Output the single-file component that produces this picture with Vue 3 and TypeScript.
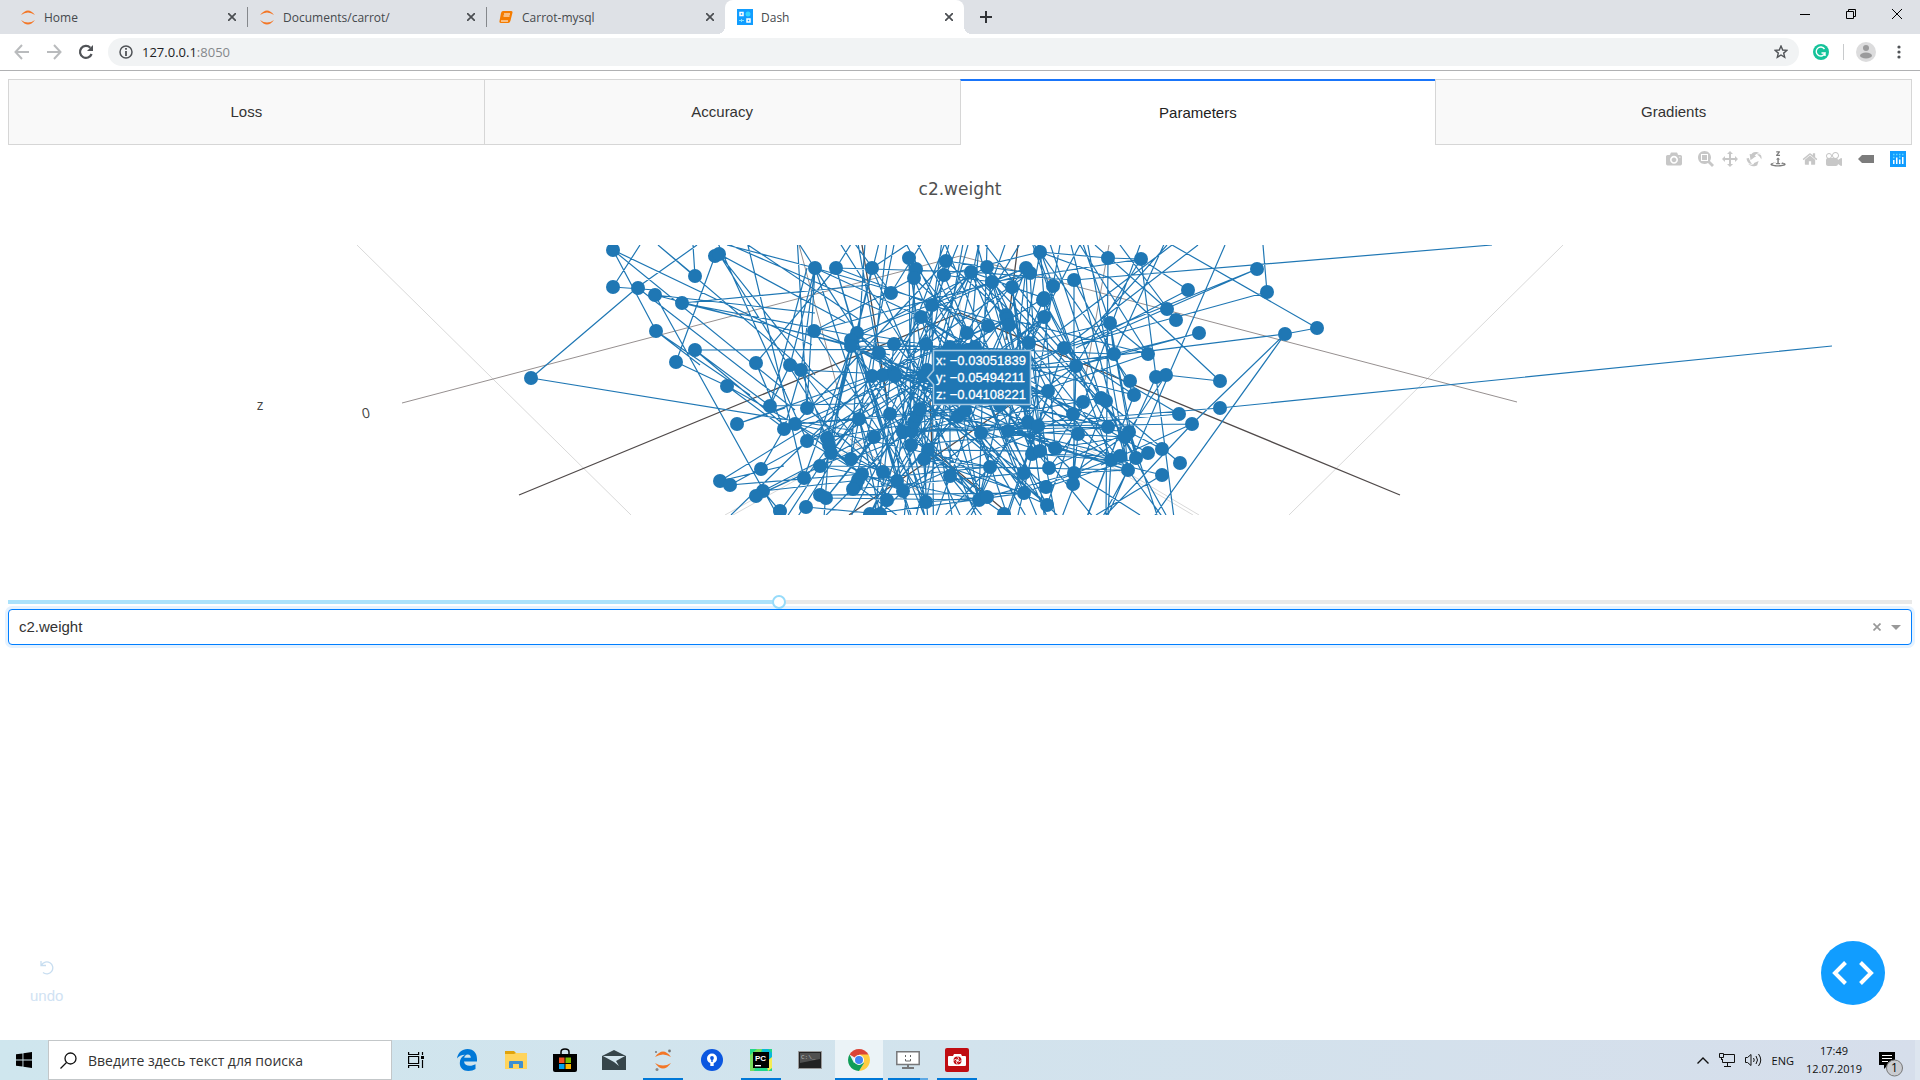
<script setup lang="ts">
import { ref } from 'vue'

interface ModeIcon { name: string; path: string; box: string; shift: number; active?: boolean }

const sliderValue = ref(404)
const layer = ref('c2.weight')
const query = ref('')
const address = '127.0.0.1'

const browserTabs = [
  { title: 'Home', icon: 'jupyter' },
  { title: 'Documents/carrot/', icon: 'jupyter' },
  { title: 'Carrot-mysql', icon: 'book' },
  { title: 'Dash', icon: 'dash' },
]
const views = ['Loss', 'Accuracy', 'Parameters', 'Gradients']
const current = ref('Parameters')

const modeGroups: ModeIcon[][] = [
  [{ name: 'Download plot as a png', box: '0 0 1000 1000', shift: 850, path: 'm500 450c-83 0-150-67-150-150 0-83 67-150 150-150 83 0 150 67 150 150 0 83-67 150-150 150z m400 150h-120c-16 0-34 13-39 29l-31 93c-6 15-23 28-40 28h-340c-16 0-34-13-39-28l-31-94c-6-15-23-28-40-28h-120c-55 0-100-45-100-100v-450c0-55 45-100 100-100h800c55 0 100 45 100 100v450c0 55-45 100-100 100z m-400-550c-138 0-250 112-250 250 0 138 112 250 250 250 138 0 250-112 250-250 0-138-112-250-250-250z m365 380c-19 0-35 16-35 35 0 19 16 35 35 35 19 0 35-16 35-35 0-19-16-35-35-35z' }],
  [
    { name: 'Zoom', box: '0 0 1000 1000', shift: 850, path: 'm1000-25l-250 251c40 63 63 138 63 218 0 224-182 406-407 406-224 0-406-182-406-406s183-406 407-406c80 0 155 22 218 62l250-250 125 125z m-812 250l0 438 437 0 0-438-437 0z m62 375l313 0 0-312-313 0 0 312z' },
    { name: 'Pan', box: '0 0 1000 1000', shift: 850, path: 'm1000 350l-187 188 0-125-250 0 0 250 125 0-188 187-187-187 125 0 0-250-250 0 0 125-188-188 186-187 0 125 252 0 0-250-125 0 187-188 188 188-125 0 0 250 250 0 0-126 187 188z' },
    { name: 'Orbital rotation', box: '0 0 1000 1000', shift: 850, path: 'm922 660c-5 4-9 7-14 11-359 263-580-31-580-31l-102 28 58-400c0 1 1 1 2 2 118 108 351 249 351 249s-62 27-100 42c88 83 222 183 347 122 16-8 30-17 44-27-2 1-4 2-6 4z m36-329c0 0 64 229-88 296-62 27-124 14-175-11 157-78 225-208 249-266 8-19 11-31 11-31 2 5 6 15 11 32-5-13-8-20-8-20z m-775-239c70-31 117-50 198-32-121 80-199 346-199 346l-96-15-58-12c0 0 55-226 155-287z m603 133l-317-139c0 0 4-4 19-14 7-5 24-15 24-15s-177-147-389 4c235-287 536-112 536-112l31-22 100 299-4-1z' },
    { name: 'Turntable rotation', box: '0 0 1000 1000', shift: 850, active: true, path: 'm833 5l-17 108v41l-130-65 130-66c0 0 0 38 0 39 0-1 36-14 39-25 4-15-6-22-16-30-15-12-39-16-56-20-90-22-187-23-279-23-261 0-341 34-353 59 3 60 228 110 228 110-140-8-351-35-351-116 0-120 293-142 474-142 155 0 477 22 477 142 0 50-74 79-163 96z m-374 94c-58-5-99-21-99-40 0-24 65-43 144-43 79 0 143 19 143 43 0 19-42 34-98 40v216h87l-132 135-133-135h88v-216z m167 515h-136v1c16 16 31 34 46 52l84 109v54h-230v-71h124v-1c-16-17-28-32-44-51l-89-114v-51h245v72z' },
  ],
  [
    { name: 'Reset camera to default', box: '0 0 929 1000', shift: 850, path: 'm786 296v-267q0-15-11-26t-25-10h-214v214h-143v-214h-214q-15 0-25 10t-11 26v267q0 1 0 2t0 2l321 264 321-264q1-1 1-4z m124 39l-34-41q-5-5-12-6h-2q-7 0-12 3l-386 322-386-322q-7-4-13-4-7 2-12 7l-35 41q-4 5-3 13t6 12l401 334q18 15 42 15t43-15l136-114v109q0 8 5 13t13 5h107q8 0 13-5t5-13v-227l122-102q5-5 6-12t-4-13z' },
    { name: 'Reset camera to last save', box: '0 0 1000 1000', shift: 850, path: 'm938 413l-188-125c0 37-17 71-44 94 64 38 107 107 107 187 0 121-98 219-219 219-121 0-219-98-219-219 0-61 25-117 66-156h-115c30 33 49 76 49 125 0 103-84 187-187 187s-188-84-188-187c0-57 26-107 65-141-38-22-65-62-65-109v-250c0-70 56-126 125-126h500c69 0 125 56 125 126l188-126c34 0 62 28 62 63v375c0 35-28 63-62 63z m-750 0c-69 0-125 56-125 125s56 125 125 125 125-56 125-125-56-125-125-125z m406-1c-87 0-157 70-157 157 0 86 70 156 157 156s156-70 156-156-70-157-156-157z' },
  ],
  [{ name: 'Toggle show closest data on hover', box: '0 0 1500 1000', shift: 850, active: true, path: 'm375 725l0 0-375-375 375-374 0-1 1125 0 0 750-1125 0z' }],
]

type Pair = [number, number]
type Segment = [number, number, number, number]

/* Projected positions of the weights. */
const points: Pair[] = [
  [613, 250], [715, 256], [719, 254], [613, 287], [638, 288], [655, 295], [682, 303], [695, 276], [656, 331], [695, 350],
  [676, 362], [531, 378], [756, 363], [790, 365], [801, 370], [727, 386], [737, 424], [770, 406], [807, 408], [784, 429],
  [795, 424], [807, 441], [761, 469], [720, 481], [730, 485], [763, 491], [756, 496], [804, 478], [780, 511], [806, 507],
  [815, 268], [836, 268], [872, 268], [909, 258], [916, 269], [914, 278], [946, 261], [944, 275], [971, 272], [987, 267],
  [992, 282], [1012, 287], [1026, 268], [1030, 273], [1040, 252], [1053, 286], [1043, 300], [1044, 298], [1044, 317],
  [1006, 315], [1007, 319], [1009, 325], [988, 326], [967, 333], [932, 305], [921, 317], [891, 293], [814, 331], [857, 333],
  [851, 340], [851, 346], [894, 344], [879, 353], [926, 344], [950, 347], [958, 350], [968, 350], [975, 347], [1029, 343],
  [872, 376], [883, 375], [894, 373], [895, 376], [927, 370], [924, 376], [890, 414], [859, 419], [827, 438], [829, 445],
  [831, 453], [874, 437], [903, 432], [912, 431], [914, 422], [917, 416], [920, 409], [911, 445], [928, 450], [924, 459],
  [958, 416], [965, 411], [981, 433], [1008, 431], [1028, 422], [1038, 426], [1048, 391], [1032, 454], [1040, 451],
  [1055, 448], [851, 459], [820, 466], [862, 474], [858, 480], [856, 485], [853, 489], [883, 472], [897, 481], [903, 491],
  [887, 500], [926, 502], [950, 476], [990, 467], [1024, 473], [1049, 468], [1046, 487], [1024, 493], [1047, 505],
  [820, 495], [826, 498], [979, 500], [987, 497], [870, 514], [880, 514], [1004, 514], [1000, 405], [1025, 402], [1074, 280],
  [1108, 258], [1141, 259], [1188, 290], [1167, 309], [1176, 320], [1199, 333], [1110, 323], [1064, 348], [1114, 354],
  [1148, 354], [1076, 366], [1156, 377], [1166, 375], [1220, 381], [1130, 381], [1134, 395], [1101, 398], [1106, 401],
  [1083, 402], [1073, 414], [1078, 434], [1108, 427], [1179, 414], [1192, 424], [1220, 408], [1129, 432], [1125, 437],
  [1111, 460], [1120, 456], [1136, 458], [1148, 453], [1162, 449], [1180, 463], [1162, 475], [1128, 470], [1074, 473],
  [1073, 484], [1257, 269], [1267, 292], [1317, 328], [1285, 334],
]

const outerSegments: Segment[] = [
  [531, 378, 638, 287], [531, 378, 850, 430], [613, 250, 656, 331], [613, 250, 812, 345], [613, 250, 785, 390],
  [613, 287, 640, 245], [613, 287, 655, 290], [638, 287, 697, 245], [655, 295, 775, 511], [655, 295, 815, 313],
  [655, 295, 850, 346], [682, 303, 870, 285], [682, 303, 851, 335], [682, 303, 890, 355], [656, 331, 750, 395],
  [676, 362, 715, 256], [676, 362, 727, 386], [695, 276, 693, 245], [695, 276, 658, 245], [658, 245, 880, 435],
  [695, 350, 1000, 349], [695, 350, 790, 430], [695, 350, 784, 425], [727, 386, 795, 424], [727, 386, 785, 429],
  [737, 424, 785, 408], [737, 424, 872, 376], [720, 481, 884, 380], [720, 481, 784, 466], [730, 485, 862, 474],
  [730, 485, 924, 380], [719, 254, 815, 375], [719, 254, 835, 440], [719, 254, 845, 322], [815, 268, 727, 245],
  [748, 245, 860, 320], [756, 363, 836, 268], [790, 365, 815, 268], [756, 363, 784, 429], [763, 491, 920, 409],
  [756, 496, 900, 430], [731, 515, 880, 370], [730, 245, 880, 310], [770, 406, 807, 268], [770, 406, 872, 403],
  [770, 406, 790, 365], [801, 370, 784, 429], [801, 370, 880, 470], [761, 469, 784, 429], [763, 491, 861, 480],
  [780, 511, 763, 491], [780, 511, 830, 445], [638, 288, 795, 410], [656, 331, 700, 365], [770, 406, 695, 350],
  [1074, 280, 1492, 245], [1257, 269, 1083, 345], [1257, 269, 1020, 365], [1267, 292, 1263, 245], [1267, 292, 1064, 348],
  [1317, 328, 1172, 245], [1317, 328, 1285, 334], [1285, 334, 1000, 370], [1285, 334, 1155, 515], [1285, 334, 1192, 424],
  [1192, 424, 1106, 515], [1199, 333, 1114, 354], [1199, 333, 1076, 366], [1188, 290, 1141, 259], [1188, 290, 1076, 348],
  [1220, 381, 1110, 278], [1110, 278, 1040, 252], [1220, 381, 1166, 375], [1220, 408, 1832, 346], [1220, 408, 1030, 423],
  [1192, 424, 1038, 426], [1192, 424, 1101, 465], [1179, 414, 1101, 368], [1179, 414, 1000, 430], [1180, 463, 1106, 401],
  [1162, 475, 1055, 448], [1162, 475, 1096, 515], [1225, 245, 1108, 515], [1198, 245, 1064, 348], [1172, 245, 1060, 330],
  [1162, 449, 1129, 432], [1130, 432, 1157, 515], [1074, 473, 1140, 515], [1101, 398, 1166, 515], [1166, 375, 1125, 437],
  [1134, 395, 1088, 515], [1156, 377, 1120, 456], [1108, 258, 1106, 515], [1108, 258, 1141, 259], [1108, 258, 1040, 252],
  [1167, 309, 1095, 245], [1176, 320, 1120, 245], [1148, 354, 1110, 323], [1148, 354, 1080, 245], [1167, 245, 1100, 320],
]

/* Joins pairs of weights with a fixed pseudo-random sequence so every render agrees. */
function innerSegments(): Segment[] {
  let state = 7919
  const next = (): number => {
    state = (state * 16807) % 2147483647
    return state / 2147483647
  }
  const core = points.filter(([x]) => x > 790 && x < 1150)
  const found: Segment[] = []
  while (found.length < 235) {
    const [ax, ay] = core[Math.floor(next() * core.length)]
    const [bx, by] = core[Math.floor(next() * core.length)]
    const reach = Math.hypot(ax - bx, ay - by)
    if (reach > 25 && reach < 230) found.push([ax, ay, bx, by])
  }
  for (let i = 0; i < 84; i++) {
    const [ax, ay] = core[Math.floor(next() * core.length)]
    const away = i % 2 ? 150 : 620
    const lean = (960 - ax) / 4 + (next() - 0.5) * 340
    found.push([ax, ay, ax + Math.round(lean), away])
  }
  return found
}

const traces = [...outerSegments, ...innerSegments()]
  .map(([a, b, c, d]) => `M${a} ${b}L${c} ${d}`)
  .join('')
</script>

<template>
  <div class="screen">
    <header class="tab-strip">
      <div v-for="(tab, i) in browserTabs" :key="tab.title" class="browser-tab" :class="{ active: i === 3, ruled: i < 2 }">
        <svg v-if="tab.icon === 'jupyter'" class="favicon" viewBox="0 0 16 16"><path d="M1 6Q8-3 15 6 8 1 1 6ZM1 11Q8 20 15 11 8 16 1 11Z" fill="#f37626" /></svg>
        <svg v-else-if="tab.icon === 'book'" class="favicon" viewBox="0 0 16 16"><path d="M5 2h8q2 0 1.400 2l-2 8q-.4 2-2.400 2H3q-2 0-1.500-2L3 4q.5-2 2-2Z" fill="#f57c00" /><path d="M6 5h6M5.500 7h6M3 12h7" stroke="#fff" /></svg>
        <svg v-else class="favicon" viewBox="0 0 16 16"><path fill="#119dff" d="M0 0h16v16H0z" /><path d="M3 3.500h3v3H3zM10 10h3v3h-3z" fill="none" stroke="#fff" stroke-width="1.500" /><path d="M2 11.500h5M4.500 10v3" stroke="#7fe0ff" /><circle cx="11" cy="5" r="2.500" fill="#36d6ff" /></svg>
        <span class="tab-title">{{ tab.title }}</span>
        <button class="bare" aria-label="Close tab"><svg width="8" height="8" viewBox="0 0 8 8"><path d="M0 0 8 8M8 0 0 8" stroke="#4a4d51" stroke-width="1.700" /></svg></button>
      </div>
      <button class="bare new-tab" aria-label="New tab"><svg width="12" height="12" viewBox="0 0 12 12"><path d="M6 0v12M0 6h12" stroke="#303236" stroke-width="2" /></svg></button>
      <div class="window-buttons">
        <button class="bare" aria-label="Minimize"><svg width="10" height="10"><path d="M0 5.500h10" stroke="#000" /></svg></button>
        <button class="bare" aria-label="Restore"><svg width="10" height="10" fill="none" stroke="#000"><path d="M.5 2.500h7v7h-7zM2.500 2.500v-2h7v7h-2" /></svg></button>
        <button class="bare" aria-label="Close"><svg width="10" height="10"><path d="M0 0 10 10M10 0 0 10" stroke="#000" /></svg></button>
      </div>
    </header>

    <nav class="toolbar" aria-label="Browser">
      <button class="bare nav-button" aria-label="Back"><svg width="16" height="16" viewBox="0 0 16 16" fill="none" stroke="#b9bbbd" stroke-width="2"><path d="M15 8H2M8 1 1.500 8 8 15" /></svg></button>
      <button class="bare nav-button" aria-label="Forward"><svg width="16" height="16" viewBox="0 0 16 16" fill="none" stroke="#b9bbbd" stroke-width="2"><path d="M1 8h13M8 1l6.500 7L8 15" /></svg></button>
      <button class="bare nav-button" aria-label="Reload"><svg width="16" height="16" viewBox="0 0 16 16"><path d="M13.600 10A6 6 0 1 1 12.300 3.700" fill="none" stroke="#505357" stroke-width="2.200" /><path d="M15 1v6H9z" fill="#505357" /></svg></button>
      <div class="address">
        <svg width="14" height="14" viewBox="0 0 14 14"><circle cx="7" cy="7" r="6" fill="none" stroke="#505357" stroke-width="1.500" /><path d="M7 3v1.800M7 6v5" stroke="#505357" stroke-width="1.800" /></svg>
        <p class="url">{{ address }}<span>:8050</span></p>
        <button class="bare" aria-label="Bookmark"><svg width="14" height="14" viewBox="0 0 14 14"><path d="m7 1 1.700 4 4.300.3-3.300 2.800 1 4.200L7 10l-3.700 2.300 1-4.200L1 5.300 5.300 5Z" fill="none" stroke="#505357" stroke-width="1.400" /></svg></button>
      </div>
      <div class="extensions">
        <svg width="16" height="16" viewBox="0 0 16 16"><circle cx="8" cy="8" r="8" fill="#15c39a" /><path d="M11.500 5A4.500 4.500 0 1 0 12 9H8.500M12 9v3" fill="none" stroke="#fff" stroke-width="1.400" /></svg>
        <i class="rule"></i>
        <svg width="20" height="20" viewBox="0 0 20 20"><circle cx="10" cy="10" r="10" fill="#dcdcdd" /><circle cx="10" cy="6" r="3" fill="#9b9b9c" /><ellipse cx="10" cy="13.500" rx="6" ry="3" fill="#9b9b9c" /></svg>
        <svg class="dots" width="4" height="14" fill="#505357"><circle cx="2" cy="2" r="1.600" /><circle cx="2" cy="7" r="1.600" /><circle cx="2" cy="12" r="1.600" /></svg>
      </div>
    </nav>

    <main class="page">
      <div class="views" role="tablist">
        <button v-for="view in views" :key="view" class="view" role="tab" :aria-selected="view === current" :class="{ selected: view === current }" @click="current = view">{{ view }}</button>
      </div>

      <div class="modebar">
        <div v-for="(group, g) in modeGroups" :key="g" class="mode-group">
          <button v-for="icon in group" :key="icon.name" class="bare" :aria-label="icon.name">
            <svg width="16" height="16" :viewBox="icon.box"><path :transform="`matrix(1 0 0 -1 0 ${icon.shift})`" :d="icon.path" :fill="icon.active ? '#7c7c7c' : '#c7c7c7'" /></svg>
          </button>
        </div>
        <a href="#" class="plot-logo" aria-label="Produced with Plotly">
          <svg width="16" height="16" viewBox="0 0 16 16"><path fill="#119dff" d="M0 0h16v16H0z" /><path d="M3 9h1.500v4H3zM6 6.500h1.500V13H6zM9 8.500h1.500V13H9zM12 6h1.500v7H12z" fill="#fff" /><path d="M3 3.500h1.500M6 3.500h1.500M9 3.500h1.500M12 3.500h1.500M3 6.500h1.500M9 6h1.500" stroke="#60d8ff" stroke-width="1.300" /></svg>
        </a>
      </div>

      <svg class="chart" viewBox="8 167 1904 428" role="img" aria-label="c2.weight">
        <defs><clipPath id="scene"><path d="M88 245h1744v270H88z" /></clipPath></defs>
        <text class="chart-title" x="960" y="195" text-anchor="middle">c2.weight</text>
        <text class="axis-text" x="260" y="410" text-anchor="middle">z</text>
        <text class="axis-text" x="366" y="418" text-anchor="middle" transform="rotate(-12 366 413)">0</text>
        <g clip-path="url(#scene)" fill="none">
          <path d="M357 245 631 515M1563 245 1289 515M960 256V420M725 515 860 440M733 515 868 440M1080 448 1193 515M1086 448 1199 515" stroke="#d9d9d9" />
          <path d="M402 403 960 256 1517 402M799 245 838 390M1109 245 1085 380M850 439 930 500" stroke="#969090" />
          <path d="M519 495 960 313 1400 495M862 245 888 405M1018 245 1006 340M849 515 1010 405M930 400 932 450 1010 515" stroke="#504a4a" stroke-width="1.300" />
          <path :d="traces" stroke="#1f77b4" stroke-width="1.200" />
          <circle v-for="([x, y], i) in points" :key="i" :cx="x" :cy="y" r="7" fill="#1f77b4" />
        </g>
        <path d="M933.500 350.500h97v54h-97v-20l-6-7 6-7z" fill="#1f77b4" stroke="#a5c8e1" stroke-width="1.500" />
        <g class="hover-text">
          <text x="936" y="365">x: −0.03051839</text>
          <text x="936" y="382">y: −0.05494211</text>
          <text x="936" y="399">z: −0.04108221</text>
        </g>
      </svg>

      <input v-model.number="sliderValue" class="slider" type="range" min="0" max="1000" aria-label="Step" :style="{ '--fill': sliderValue / 10 + '%' }" />

      <div class="picker">
        <select v-model="layer" aria-label="Layer"><option>c2.weight</option></select>
        <div class="picker-tools">
          <button class="bare" aria-label="Clear"><svg width="8" height="8"><path d="M.5.5 7.500 7.500M7.500.5.5 7.500" stroke="#999" stroke-width="1.700" /></svg></button>
          <svg width="10" height="5"><path d="M0 0h10L5 5z" fill="#999" /></svg>
        </div>
      </div>

      <footer class="page-tools">
        <button class="bare undo"><svg width="14" height="14" viewBox="0 0 14 14" fill="none" stroke="#c7ddf0"><path d="M1 0v4.500h5M1.500 4A6 6 0 1 1 3 11.500" stroke-width="1.300" /></svg><span>undo</span></button>
        <button class="bare debug" aria-label="Developer tools"><svg width="42" height="24" viewBox="0 0 42 24" fill="none" stroke="#fff" stroke-width="4"><path d="M13.500 1.500 3 12l10.500 10.500M28.500 1.500 39 12 28.500 22.500" /></svg></button>
      </footer>
    </main>

    <footer class="taskbar">
      <button class="bare start" aria-label="Start"><svg width="16" height="16" viewBox="0 0 16 16"><path d="M0 2.300 6.500 1.400v6.200H0zM7.400 1.300 16 0v7.600H7.400zM0 8.400h6.500v6.200L0 13.700zM7.400 8.400H16V16l-8.600-1.300z" /></svg></button>
      <label class="search">
        <svg width="17" height="17" viewBox="0 0 17 17" fill="none" stroke="#111" stroke-width="1.300"><circle cx="10.500" cy="6.500" r="5.500" /><path d="M6.500 10.500.5 16.500" /></svg>
        <input v-model="query" type="text" placeholder="Введите здесь текст для поиска" aria-label="Поиск" />
      </label>
      <div class="apps">
        <button class="bare app task-view" aria-label="Task view"><svg width="16" height="16" viewBox="0 0 16 16" fill="none" stroke="#000" stroke-width="1.200"><path d="M.6 0v2.500h10V0M.6 16v-2.500h10V16M.6 4.500h10v7H.6zM14.500 0v3M14.500 8v8" /><path d="M13 4h3v3h-3z" fill="#000" stroke="none" /></svg></button>
        <button class="bare app" aria-label="Edge"><svg width="22" height="22" viewBox="0 0 22 22"><path d="M1 9.500C2 3.500 6 0 11.500 0 18 0 21 4.500 21 10v2.500H8c.3 3 2.700 4.300 5.700 4.300 2.200 0 4.200-.6 5.800-1.500V20c-1.800 1.200-4.200 2-7.200 2C7 22 3.800 18.600 3.800 14c0-3.800 2-6.700 5.200-8.200C5.500 5.800 2.500 7.500 1 9.500ZM8.200 8.800h6.600c0-2-1-3.300-3-3.300S8.600 6.900 8.200 8.800Z" fill="#0078d7" /></svg></button>
        <button class="bare app" aria-label="Explorer"><svg width="22" height="18" viewBox="0 0 22 18"><path d="M0 0h9l2 2h10v4H0z" fill="#e0a30c" /><path d="M0 3h9l2-1h11v16H0z" fill="#ffd45c" /><path d="M4 17v-6q0-1 1-1h12q1 0 1 1v6h-4v-4H8v4z" fill="#3d8fd1" /></svg></button>
        <button class="bare app" aria-label="Store"><svg width="24" height="24" viewBox="0 0 24 24"><path d="M8 7V4q0-3 4-3t4 3v3" fill="none" stroke="#000" stroke-width="1.500" /><path d="M0 6h24v16q0 2-2 2H2q-2 0-2-2z" /><path d="M6 9.500h5.500V15H6z" fill="#f25022" /><path d="M12.500 9.500H18V15h-5.500z" fill="#7fba00" /><path d="M6 16h5.500v5H6z" fill="#00a4ef" /><path d="M12.500 16H18v5h-5.500z" fill="#ffb900" /></svg></button>
        <button class="bare app" aria-label="Mail"><svg width="24" height="20" viewBox="0 0 24 20"><path d="M0 6 12 0l12 6v14H0z" fill="#36454a" /><path d="M1 6h22l-9 5 3 5-5-4z" fill="#d2e5ee" /></svg></button>
        <button class="bare app running" aria-label="Jupyter"><svg width="18" height="22" viewBox="0 0 18 22"><path d="M1 8Q9-3 17 8 9 3 1 8ZM1 14Q9 25 17 14 9 19 1 14Z" fill="#f37626" /><circle cx="15.500" cy="2" r="1.400" fill="#777" /><circle cx="2" cy="3" r="1" fill="#777" /><circle cx="3" cy="20.500" r="1.500" fill="#888" /></svg></button>
        <button class="bare app" aria-label="Password manager"><svg width="22" height="22" viewBox="0 0 22 22"><circle cx="11" cy="11" r="11" fill="#0b57e0" /><circle cx="11" cy="9.500" r="5" fill="#fff" /><path d="M9.300 9h3.400v8H9.300z" fill="#fff" /><circle cx="11" cy="9" r="1.900" fill="#0b57e0" /><path d="M10.300 10h1.400v3h-1.400z" fill="#0b57e0" /></svg></button>
        <button class="bare app running" aria-label="PyCharm"><svg width="22" height="22" viewBox="0 0 22 22"><path d="M0 0h22v22H0z" fill="#21d789" /><path d="M12 0h6l4 4v9l-8-4z" fill="#08b8d8" /><path d="M16 13 22 8v11l-4 3z" fill="#f5ec52" /><path d="M0 6 7 0h5L4 22H0z" fill="#79dc5c" /><path d="M3 3h16v16H3z" /><path d="M5 16h6v1.400H5z" fill="#fff" /><text x="5" y="12" class="pc">PC</text></svg></button>
        <button class="bare app" aria-label="Command line"><svg width="24" height="18" viewBox="0 0 24 18"><path d="M.5.5h23v17H.5z" fill="#222" stroke="#999" /><path d="M2 2h20v6L2 12z" fill="#505050" /><text x="3" y="8" class="cmd">C:\_</text></svg></button>
        <button class="bare app running focused" aria-label="Chrome"><svg width="22" height="22" viewBox="0 0 22 22"><path d="M11 11 1.500 5.500a11 11 0 0 1 19 0z" fill="#db4437" /><path d="M11 11V5.500h9.500A11 11 0 0 1 11 22l5-8z" fill="#ffcd40" /><path d="M11 11 16 14 11 22A11 11 0 0 1 1.500 5.500L6 14z" fill="#0f9d58" /><circle cx="11" cy="11" r="5" fill="#fff" /><circle cx="11" cy="11" r="4" fill="#4285f4" /></svg></button>
        <button class="bare app running grouped" aria-label="Remote desktop"><svg width="24" height="18" viewBox="0 0 24 18"><path d="M.8.800h22.400v12.700H.8z" fill="#fff" stroke="#77787a" stroke-width="1.500" /><path d="M12 14v3M6 17h12" stroke="#77787a" stroke-width="2" /><path d="M9.500 4v2M14.500 4v2M9.500 8v2h5V8" fill="none" stroke="#666" /></svg></button>
        <button class="bare app running" aria-label="Screen capture"><svg width="24" height="24" viewBox="0 0 24 24"><rect width="24" height="24" rx="2" fill="#c00d12" /><path d="M4 8q-1 0-1 1v8q0 1 1 1h16q1 0 1-1V9q0-1-1-1h-3l-1-2H9L8 8z" fill="#fff" /><circle cx="12.500" cy="12.500" r="4" fill="#c00d12" /><circle cx="12.500" cy="12.500" r="1.300" fill="#fff" /><path d="m12.500 8.500 1.500 3M16.500 12.500l-3 1.500M12.500 16.500l-1.500-3M8.500 12.500l3-1.500" stroke="#fff" stroke-width=".8" /></svg></button>
      </div>
      <div class="tray">
        <svg width="12" height="7" fill="none" stroke="#111" stroke-width="1.400"><path d="M.5 6.500 6 1l5.500 5.500" /></svg>
        <svg width="16" height="14" viewBox="0 0 16 14" fill="none" stroke="#111"><path d="M5 1.500h10.500v8h-12V6M8.500 10v3M5 13.500h7M.5.500h4v4h-4zM2.500 5v2" /></svg>
        <svg width="17" height="14" viewBox="0 0 17 14" fill="none" stroke="#111"><path d="M.5 4.500h2L6 1.500v11l-3.500-3h-2zM8.500 5q1.500 2 0 4M11 3q3 4 0 8M13.500 1q4.500 6 0 12" /></svg>
        <span>ENG</span>
        <time class="clock"><span>17:49</span><span>12.07.2019</span></time>
        <svg class="notice" width="24" height="25" viewBox="0 0 24 25"><path d="M0 0h16v13H9l-4 4v-4H0z" /><path d="M3 3.500h10M3 6.500h10M3 9.500h6" stroke="#fff" stroke-width="1.200" /><circle cx="15.500" cy="16" r="8" fill="#c9cbd0" stroke="#777" /><text x="15.500" y="20" text-anchor="middle">1</text></svg>
      </div>
    </footer>
  </div>
</template>

<style>
html, body { margin: 0; background: #fff; }
</style>

<style scoped>
.screen { min-height: 100vh; display: flex; flex-direction: column; font-family: "Liberation Sans", Arial, sans-serif; color: #333; }
.screen *, .screen *::before, .screen *::after { box-sizing: border-box; }
svg { display: block; flex: none; }
.bare { border: 0; padding: 0; margin: 0; background: none; font: inherit; color: inherit; display: flex; align-items: center; justify-content: center; }

.tab-strip { display: flex; height: 34px; padding-left: 8px; background: #dee1e6; }
.browser-tab { position: relative; display: flex; align-items: center; width: 239px; padding: 0 11px 0 12px; font: 12px "Open Sans", sans-serif; color: #45494d; }
.ruled::after { content: ""; position: absolute; right: -1px; top: 7px; height: 20px; width: 1px; background: #85888c; }
.favicon { width: 16px; height: 16px; }
.tab-title { flex: 1; padding-left: 8px; }
.active { background: #fff; border-radius: 8px 8px 0 0; }
.active::before, .active::after { content: ""; position: absolute; bottom: 0; width: 8px; height: 8px; }
.active::before { left: -8px; background: radial-gradient(circle at 0 0, #dee1e6 8px, #fff 8px); }
.active::after { right: -8px; background: radial-gradient(circle at 100% 0, #dee1e6 8px, #fff 8px); }
.new-tab { width: 44px; height: 34px; }
.window-buttons { display: flex; margin-left: auto; height: 28px; }
.window-buttons button { width: 46px; }

.toolbar { display: flex; align-items: center; height: 37px; padding-left: 6px; border-bottom: 1px solid #b0b1b3; background: #fff; }
.nav-button { width: 32px; height: 28px; }
.address { flex: 1; display: flex; align-items: center; height: 28px; margin-left: 6px; padding: 0 11px; border-radius: 14px; background: #f1f3f4; }
.url { flex: 1; margin: 0 0 0 9px; font: 13px "Open Sans", sans-serif; color: #202124; }
.url span { color: #85888b; }
.extensions { display: flex; align-items: center; width: 121px; padding-left: 14px; }
.rule { width: 1px; height: 16px; margin: 0 12px 0 14px; background: #c8cacc; }
.dots { margin-left: 21px; }

.page { flex: 1; display: flex; flex-direction: column; padding: 8px 8px 0; }
.views { display: flex; height: 66px; }
.view { flex: 1; margin: 0; padding: 0 0 2px; border: 1px solid #d6d6d6; border-right: 0; background: #f9f9f9; font: 15px "Liberation Sans", Arial, sans-serif; color: #333; }
.view:last-child { border-right: 1px solid #d6d6d6; }
.view.selected { border-top: 2px solid #1975fa; border-bottom: 0; background: #fff; color: #222; }
.modebar { display: flex; justify-content: flex-end; gap: 16px; height: 22px; padding: 6px 6px 0 0; }
.mode-group { display: flex; gap: 8px; }
.plot-logo { display: block; }
.chart { width: 100%; height: 428px; }
.chart-title { font: 17px "DejaVu Sans", Verdana, sans-serif; fill: #505050; }
.axis-text { font: 14px "Open Sans", sans-serif; fill: #444; }
.hover-text { font: 13px "Liberation Sans", Arial, sans-serif; fill: #fff; stroke: #fff; stroke-width: .3px; }

.slider { -webkit-appearance: none; appearance: none; position: relative; z-index: 1; display: block; width: 100%; height: 14px; margin: 0; background: none; }
.slider::-webkit-slider-runnable-track { height: 4px; background: linear-gradient(to right, #abe2fb var(--fill), #e9e9e9 var(--fill)); }
.slider::-webkit-slider-thumb { -webkit-appearance: none; width: 14px; height: 14px; margin-top: -5px; border: 2px solid #96dbfa; border-radius: 50%; background: #fff; }
.picker { position: relative; height: 36px; }
.picker select { -webkit-appearance: none; appearance: none; display: block; width: 100%; height: 36px; padding: 0 48px 2px 10px; border: 1px solid #007eff; border-radius: 4px; box-shadow: 0 0 0 3px #e5f2ff; background: #fff; font: 15px "Liberation Sans", Arial, sans-serif; color: #333; }
.picker-tools { position: absolute; right: 11px; top: 0; height: 36px; display: flex; align-items: center; gap: 10px; }
.page-tools { display: flex; justify-content: space-between; align-items: flex-end; margin-top: auto; padding: 0 27px 35px 22px; }
.undo { flex-direction: column; gap: 12px; font-size: 15px; line-height: 18px; color: #d0e2f3; }
.debug { width: 64px; height: 64px; border-radius: 50%; background: #119dff; }

.taskbar { display: flex; height: 40px; background: linear-gradient(to right, #cfe6ee, #d2e3ed 50%, #d6deeb); font-family: "Open Sans", sans-serif; color: #111; }
.start { width: 48px; }
.search { display: flex; align-items: center; width: 344px; padding-left: 11px; border: 1px solid #c3c7c9; background: #fff; }
.search input { flex: 1; min-width: 0; margin: 0 0 0 11px; padding: 0; border: 0; outline: 0; background: none; font: 14px "Open Sans", sans-serif; }
.search input::placeholder { color: #333; opacity: 1; }
.apps { display: flex; gap: 1px; }
.app { position: relative; width: 48px; height: 40px; }
.task-view { margin-right: 2px; }
.running::after { content: ""; position: absolute; left: 4px; right: 4px; bottom: 0; height: 2px; background: #0078d7; }
.focused { background: #ebf3f7; }
.focused::after { left: 0; right: 0; }
.grouped::after { background: linear-gradient(to right, #0078d7 80%, #5fa9e4 80%); }
.pc { font: bold 8px "Liberation Sans", sans-serif; fill: #fff; }
.cmd { font: 6px "Liberation Mono", monospace; fill: #bbb; }
.tray { display: flex; align-items: center; gap: 10px; margin-left: auto; padding-right: 12px; border-right: 5px solid #dde5ef; font-size: 11px; }
.clock { display: flex; flex-direction: column; align-items: center; width: 60px; line-height: 18px; }
.notice { margin: 8px 0 0 5px; }
.notice text { font: 12px "Open Sans", sans-serif; }
</style>
